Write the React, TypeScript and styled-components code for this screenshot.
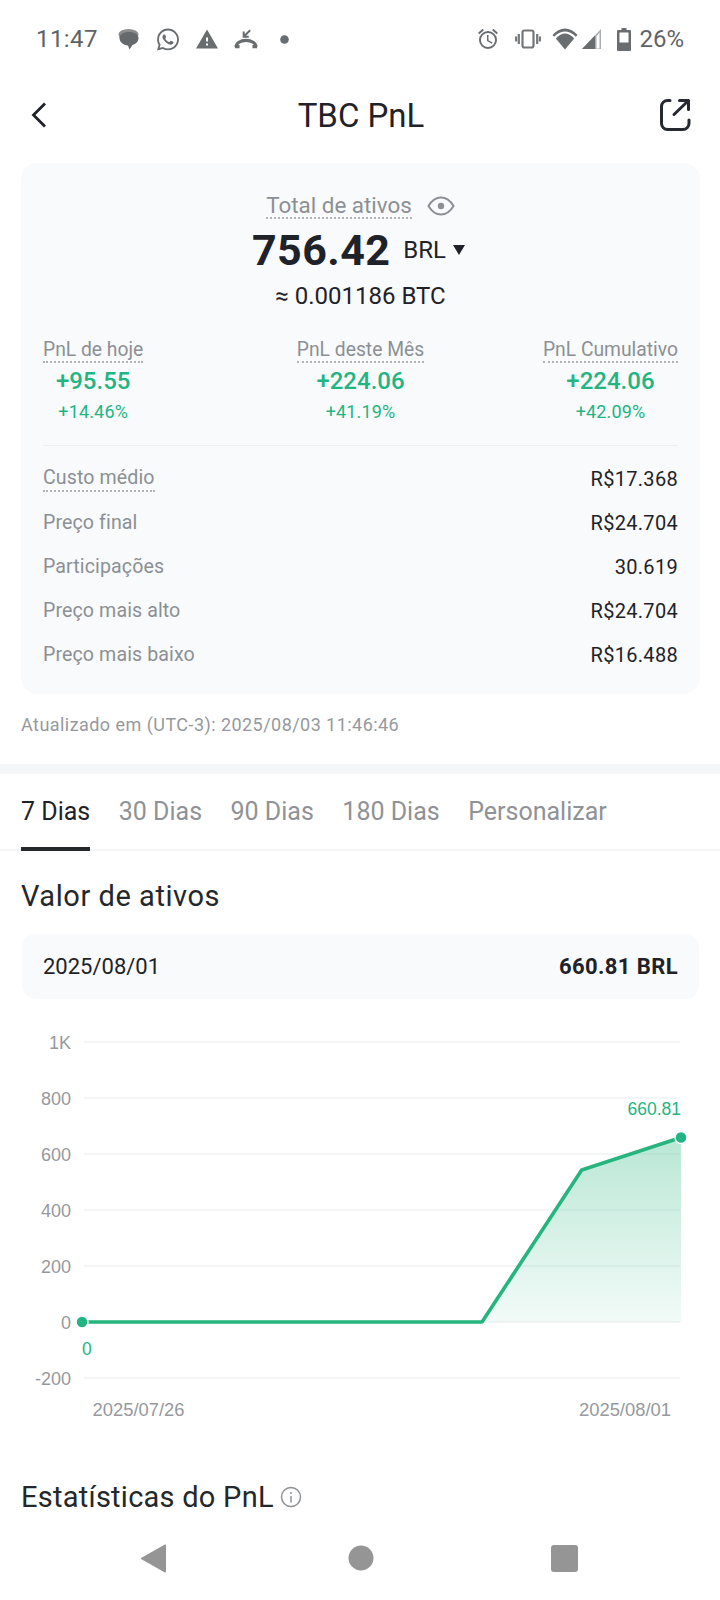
import React from "react";
import styled, { createGlobalStyle } from "styled-components";
import { FaWhatsapp } from "react-icons/fa";
import { MdWarning, MdOutlineAlarm } from "react-icons/md";

const Global = createGlobalStyle`
  html, body { margin: 0; padding: 0; background: #fff; }
  body { font-family: Roboto, "Liberation Sans", sans-serif; color: #1f2228; width: 720px; height: 1600px; overflow: hidden; }
  * { box-sizing: border-box; }
`;

const Page = styled.div`
  width: 720px;
  height: 1600px;
  display: flex;
  flex-direction: column;
  overflow: hidden;
`;

const StatusBar = styled.div`
  height: 78px;
  padding: 0 36px;
  display: flex;
  align-items: center;
  justify-content: space-between;
  color: #666a6e;
`;
const StatusGroup = styled.div`
  display: flex;
  align-items: center;
`;
const Clock = styled.span`
  font-size: 24px;
  width: 61px;
  letter-spacing: 0.4px;
  color: #5f6367;
`;
const IconSlot = styled.span<{ $w: number; $gap: number }>`
  display: flex;
  align-items: center;
  justify-content: center;
  width: ${(p) => p.$w}px;
  margin-left: ${(p) => p.$gap}px;
  color: #6a6d70;
`;
const Percent = styled.span`
  font-size: 24px;
  margin-left: 8px;
  color: #5f6367;
`;

const NavBar = styled.div`
  height: 74px;
  padding: 0 29px 0 31px;
  display: grid;
  grid-template-columns: 1fr auto 1fr;
  align-items: center;
  & > svg:last-child {
    justify-self: end;
  }
`;
const NavTitle = styled.h1`
  margin: 0;
  font-size: 33px;
  font-weight: 400;
  letter-spacing: 0;
  color: #1f2228;
`;

const Card = styled.section`
  margin: 11px 20px 0 21px;
  height: 531px;
  padding: 30px 22px 0;
  border-radius: 16px;
  background: #f8fafc;
`;
const TotalLine = styled.div`
  height: 26px;
  display: flex;
  align-items: center;
  justify-content: center;
  gap: 15px;
`;
const Hint = styled.span`
  font-size: 22.4px;
  line-height: 24px;
  color: #8c9095;
  border-bottom: 2px dotted #b0b3b7;
`;
const PnlLabel = styled(Hint)`
  font-size: 19.3px;
  line-height: 23px;
`;
const AmountLine = styled.div`
  height: 44px;
  margin-top: 9px;
  padding-right: 4px;
  display: flex;
  align-items: center;
  justify-content: center;
`;
const Amount = styled.span`
  font-size: 43px;
  font-weight: 700;
  letter-spacing: 0.4px;
  color: #1f2228;
`;
const Currency = styled.span`
  font-size: 24px;
  margin-left: 13px;
  color: #1f2228;
`;
const Caret = styled.span`
  width: 0;
  height: 0;
  margin-left: 7px;
  border-left: 6.5px solid transparent;
  border-right: 6.5px solid transparent;
  border-top: 10px solid #1f2228;
`;
const BtcLine = styled.div`
  height: 28px;
  margin-top: 10px;
  display: flex;
  align-items: center;
  justify-content: center;
  font-size: 24px;
  color: #1f2228;
`;
const PnlRow = styled.div`
  margin-top: 28px;
  display: grid;
  grid-template-columns: 1fr auto 1fr;
  & > div:first-child {
    justify-self: start;
  }
  & > div:last-child {
    justify-self: end;
  }
`;
const PnlCol = styled.div`
  display: flex;
  flex-direction: column;
  align-items: center;
`;
const PnlValue = styled.span`
  margin-top: 3px;
  height: 30px;
  line-height: 30px;
  font-size: 24px;
  font-weight: 500;
  color: #22b582;
`;
const PnlPct = styled.span`
  margin-top: 4px;
  height: 24px;
  line-height: 24px;
  font-size: 18px;
  letter-spacing: 0.15px;
  color: #22b582;
`;
const Divider = styled.div`
  height: 1px;
  margin-top: 21px;
  background: #eceef0;
`;
const Rows = styled.div`
  margin-top: 11px;
`;
const Row = styled.div`
  height: 44px;
  display: flex;
  align-items: center;
  justify-content: space-between;
`;
const RowLabel = styled.span<{ $dotted?: boolean }>`
  font-size: 19.6px;
  line-height: 24px;
  letter-spacing: 0.1px;
  color: #8c9095;
  ${(p) => (p.$dotted ? "border-bottom: 2px dotted #b0b3b7;" : "")}
`;
const RowValue = styled.span`
  font-size: 20px;
  letter-spacing: 0.3px;
  color: #1f2228;
`;
const Updated = styled.div`
  height: 24px;
  margin: 19px 21px 0;
  line-height: 24px;
  font-size: 18px;
  letter-spacing: 0.45px;
  color: #96999d;
`;
const Band = styled.div`
  height: 10px;
  margin-top: 27px;
  background: #f5f6f7;
`;
const Tabs = styled.nav`
  height: 77px;
  padding: 0 21px;
  display: flex;
  gap: 28.5px;
  border-bottom: 2px solid #f3f4f5;
`;
const Tab = styled.span<{ $active?: boolean }>`
  height: 77px;
  line-height: 76px;
  font-size: 25px;
  letter-spacing: 0;
  color: ${(p) => (p.$active ? "#1f2228" : "#8f9296")};
  border-bottom: 4px solid ${(p) => (p.$active ? "#26282c" : "transparent")};
`;
const SectionTitle = styled.h2<{ $track: number }>`
  margin: 0;
  padding: 0 21px;
  display: flex;
  align-items: center;
  gap: 6px;
  height: 36px;
  font-size: 29px;
  letter-spacing: ${(p) => p.$track}px;
  font-weight: 400;
  color: #24272c;
`;
const ValueHead = styled(SectionTitle)`
  margin-top: 27px;
`;
const StatHead = styled(SectionTitle)`
  margin-top: 49px;
`;
const ValueBox = styled.div`
  margin: 20px 21px 0 22px;
  height: 65px;
  padding: 0 21px;
  display: flex;
  align-items: center;
  justify-content: space-between;
  border-radius: 14px;
  background: #f8fafc;
  font-size: 22px;
`;
const ValueStrong = styled.strong`
  font-weight: 700;
  letter-spacing: 0.4px;
`;
const Chart = styled.svg`
  display: block;
  margin-top: 21px;
  flex: none;
`;
const AxisText = styled.text`
  font-family: "Liberation Sans", Arial, sans-serif;
  font-size: 18px;
  fill: #96999d;
`;
const DateText = styled(AxisText)`
  font-size: 18.4px;
`;
const GreenText = styled(AxisText)`
  font-size: 17.5px;
  fill: #22b582;
`;
const SystemNav = styled.div`
  margin-top: auto;
  height: 84px;
  flex: none;
  display: flex;
  align-items: center;
  background: #fff;
`;
const SysItem = styled.span<{ $ml: number }>`
  display: flex;
  margin-left: ${(p) => p.$ml}px;
`;

const Eye = () => (
  <svg width="28" height="20" viewBox="0 0 28 20" fill="none" stroke="#8c9095" strokeWidth="2">
    <path d="M1.5 10C5 4 9 1.5 14 1.5S23 4 26.5 10C23 16 19 18.5 14 18.5S5 16 1.5 10Z" />
    <circle cx="14" cy="10" r="3.2" fill="#8c9095" stroke="none" />
  </svg>
);

const rows: [string, string, boolean][] = [
  ["Custo médio", "R$17.368", true],
  ["Preço final", "R$24.704", false],
  ["Participações", "30.619", false],
  ["Preço mais alto", "R$24.704", false],
  ["Preço mais baixo", "R$16.488", false],
];
const pnl = [
  ["PnL de hoje", "+95.55", "+14.46%"],
  ["PnL deste Mês", "+224.06", "+41.19%"],
  ["PnL Cumulativo", "+224.06", "+42.09%"],
];
const grid: [string, number][] = [
  ["1K", 22],
  ["800", 78],
  ["600", 134],
  ["400", 190],
  ["200", 246],
  ["0", 302],
  ["-200", 358],
];

export default function App() {
  return (
    <Page>
      <Global />
      <StatusBar>
        <StatusGroup>
          <Clock>11:47</Clock>
          <IconSlot $w={24} $gap={20}>
            <svg width="24" height="24" viewBox="0 0 24 24">
              <ellipse cx="11.500" cy="7.500" rx="10" ry="5.500" fill="#8a8c8e" />
              <path d="M2.500 11c0-3.600 4-6 9.500-6s9.500 2.400 9.500 6-2.600 6-6 7l-3 4.500-1.500-4C6 18 2.500 15 2.500 11Z" fill="#66696c" />
            </svg>
          </IconSlot>
          <IconSlot $w={24} $gap={15}>
            <FaWhatsapp size={25} />
          </IconSlot>
          <IconSlot $w={24} $gap={15}>
            <MdWarning size={27} />
          </IconSlot>
          <IconSlot $w={24} $gap={15}>
            <svg width="26" height="22" viewBox="0 0 26 22" fill="none" stroke="#6a6d70">
              <path d="M2.200 19.500C2.200 15.500 7 12.500 13 12.500s10.800 3 10.800 7" strokeWidth="3.400" />
              <path d="M1 17.500h5v3.500H1ZM20 17.500h5v3.500h-5Z" fill="#6a6d70" stroke="none" />
              <path d="M17.500 1.500L11 8M10.500 3v5.500H16" strokeWidth="2.200" />
            </svg>
          </IconSlot>
          <IconSlot $w={9} $gap={22}>
            <svg width="9" height="9" viewBox="0 0 9 9" fill="#6a6d70">
              <circle cx="4.500" cy="4.500" r="4.300" />
            </svg>
          </IconSlot>
        </StatusGroup>
        <StatusGroup>
          <IconSlot $w={24} $gap={0}>
            <MdOutlineAlarm size={30} />
          </IconSlot>
          <IconSlot $w={26} $gap={15}>
            <svg width="26" height="20" viewBox="0 0 26 20" fill="none" stroke="#74777a" strokeWidth="2.200">
              <rect x="7.500" y="1.500" width="11" height="17" rx="2" />
              <path d="M3.800 5v10M22.200 5v10M1 7.500v5M25 7.500v5" />
            </svg>
          </IconSlot>
          <IconSlot $w={26} $gap={11}>
            <svg width="26" height="22" viewBox="0 0 26 22" fill="#6a6d70">
              <path d="M0.500 7C4 2.800 8.500 0.500 13 0.500s9 2.300 12.500 6.500l-1.600 1.800C20 5 16.500 3.500 13 3.500S6 5 2.100 8.800Z" />
              <path d="M3.800 10.500C7 7 10 5.500 13 5.500s6 1.500 9.200 5L13 21.500Z" />
            </svg>
          </IconSlot>
          <IconSlot $w={21} $gap={3}>
            <svg width="21" height="22" viewBox="0 0 21 22">
              <path d="M1 21L20 1v20Z" fill="#a9abad" />
              <path d="M1 21L14 7.500V21Z" fill="#6a6d70" />
              <path d="M15.500 8.500v12h3V4.200Z" fill="#fff" />
            </svg>
          </IconSlot>
          <IconSlot $w={14} $gap={15}>
            <svg width="14" height="24" viewBox="0 0 14 24">
              <path d="M4.500 1h5v2H13a1 1 0 0 1 1 1v19a1 1 0 0 1-1 1H1a1 1 0 0 1-1-1V4a1 1 0 0 1 1-1h3.500Z" fill="#6a6d70" />
              <rect x="2.500" y="5.500" width="9" height="10" fill="#fff" />
            </svg>
          </IconSlot>
          <Percent>26%</Percent>
        </StatusGroup>
      </StatusBar>

      <NavBar>
        <svg width="16" height="26" viewBox="0 0 16 26" fill="none" stroke="#1f2228" strokeWidth="2.800">
          <path d="M14 1.500L2.500 13L14 24.500" />
        </svg>
        <NavTitle>TBC PnL</NavTitle>
        <svg width="32" height="34" viewBox="0 0 32 34" fill="none" stroke="#26292e" strokeWidth="3" strokeLinecap="round" strokeLinejoin="round">
          <path d="M11 2.500H8.500a6 6 0 0 0-6 6v17a6 6 0 0 0 6 6H24a6 6 0 0 0 6-6V22" />
          <path d="M15 16.500L29.500 2.500M20.500 2.500H29.500V11.500" />
        </svg>
      </NavBar>

      <Card>
        <TotalLine>
          <Hint>Total de ativos</Hint>
          <Eye />
        </TotalLine>
        <AmountLine>
          <Amount>756.42</Amount>
          <Currency>BRL</Currency>
          <Caret />
        </AmountLine>
        <BtcLine>≈ 0.001186 BTC</BtcLine>
        <PnlRow>
          {pnl.map(([l, v, p]) => (
            <PnlCol key={l}>
              <PnlLabel>{l}</PnlLabel>
              <PnlValue>{v}</PnlValue>
              <PnlPct>{p}</PnlPct>
            </PnlCol>
          ))}
        </PnlRow>
        <Divider />
        <Rows>
          {rows.map(([l, v, d]) => (
            <Row key={l}>
              <RowLabel $dotted={d}>{l}</RowLabel>
              <RowValue>{v}</RowValue>
            </Row>
          ))}
        </Rows>
      </Card>

      <Updated>Atualizado em (UTC-3): 2025/08/03 11:46:46</Updated>
      <Band />
      <Tabs>
        <Tab $active>7 Dias</Tab>
        <Tab>30 Dias</Tab>
        <Tab>90 Dias</Tab>
        <Tab>180 Dias</Tab>
        <Tab>Personalizar</Tab>
      </Tabs>

      <ValueHead $track={0.55}>Valor de ativos</ValueHead>
      <ValueBox>
        <span>2025/08/01</span>
        <ValueStrong>660.81 BRL</ValueStrong>
      </ValueBox>

      <Chart width="720" height="410" viewBox="0 0 720 410">
        <defs>
          <linearGradient id="area" x1="0" y1="0" x2="0" y2="1">
            <stop offset="0" stopColor="#26b47f" stopOpacity="0.32" />
            <stop offset="1" stopColor="#26b47f" stopOpacity="0.06" />
          </linearGradient>
        </defs>
        {grid.map(([t, y]) => (
          <g key={t}>
            <line x1="84" x2="680" y1={y} y2={y} stroke="#f1f2f4" strokeWidth="1.500" />
            <AxisText x="71" y={y + 6.500} textAnchor="end">{t}</AxisText>
          </g>
        ))}
        <path d="M482 302L581.700 150L681 117.500V302Z" fill="url(#area)" />
        <path d="M82 302H482L581.700 150L681 117.500" fill="none" stroke="#26b47f" strokeWidth="3.600" strokeLinejoin="round" />
        <circle cx="82" cy="302" r="6" fill="#22b582" stroke="#fff" strokeWidth="1.500" />
        <circle cx="681" cy="117.500" r="6" fill="#22b582" stroke="#fff" strokeWidth="1.500" />
        <GreenText x="681" y="95" textAnchor="end">660.81</GreenText>
        <GreenText x="82" y="335">0</GreenText>
        <DateText x="92.500" y="395.500">2025/07/26</DateText>
        <DateText x="671" y="395.500" textAnchor="end">2025/08/01</DateText>
      </Chart>

      <StatHead $track={0.25}>
        Estatísticas do PnL
        <svg width="22" height="22" viewBox="0 0 22 22" fill="none" stroke="#8f9296" strokeWidth="1.500">
          <circle cx="11" cy="11" r="9.500" />
          <path d="M11 10v6.500M11 6v2" />
        </svg>
      </StatHead>

      <SystemNav>
        <SysItem $ml={141}>
          <svg width="26" height="29" viewBox="0 0 26 29" fill="#959595">
            <path d="M25 1.500v26a1 1 0 0 1-1.600.8L1 15.500a1 1 0 0 1 0-2L23.400.7A1 1 0 0 1 25 1.500Z" />
          </svg>
        </SysItem>
        <SysItem $ml={181}>
          <svg width="26" height="26" viewBox="0 0 26 26" fill="#959595">
            <circle cx="13" cy="13" r="12.500" />
          </svg>
        </SysItem>
        <SysItem $ml={177}>
          <svg width="27" height="27" viewBox="0 0 27 27" fill="#959595">
            <rect width="27" height="27" rx="3" />
          </svg>
        </SysItem>
      </SystemNav>
    </Page>
  );
}
